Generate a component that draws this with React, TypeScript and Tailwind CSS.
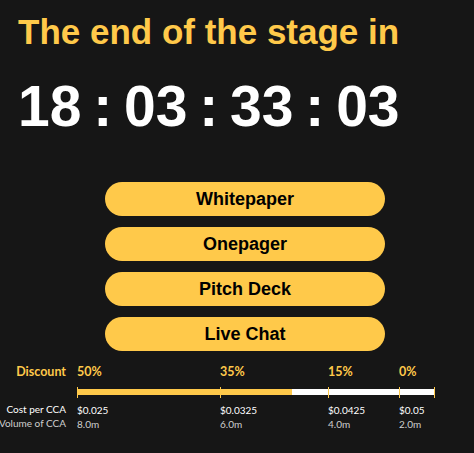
const stops = [
  { pct: "50%", cost: "$0.025", vol: "8.0m", w: "w-[143px]" },
  { pct: "35%", cost: "$0.0325", vol: "6.0m", w: "w-[108px]" },
  { pct: "15%", cost: "$0.0425", vol: "4.0m", w: "w-[71px]" },
  { pct: "0%", cost: "$0.05", vol: "2.0m", w: "w-[35px]" },
];

const links = ["Whitepaper", "Onepager", "Pitch Deck", "Live Chat"];

export default function App() {
  return (
    <div className="min-h-[453px] w-full overflow-hidden bg-[#161616] font-['Liberation_Sans',Arial,sans-serif]">
      {/* Заголовок и таймер */}
      <div className="pl-[18px] pt-[14px]">
        <h1 className="text-[35px] font-bold leading-none text-[#ffc94a]">The end of the stage in</h1>
        <div className="mt-[29px] text-[57px] font-bold leading-none text-white [word-spacing:-4px]">
          18 : 03 : 33 : 03
        </div>
      </div>

      {/* Кнопки */}
      <div className="mt-[47px] flex flex-col gap-[11px] pl-[105px]">
        {links.map((l) => (
          <button
            key={l}
            className="h-[34px] w-[280px] rounded-full bg-[#ffc94a] text-[18px] font-bold text-black"
          >
            {l}
          </button>
        ))}
      </div>

      {/* Таблица скидок */}
      <div className="mt-[13px] flex font-['Lato',sans-serif] text-[10px]">
        <div className="flex w-[66px] flex-col items-end whitespace-nowrap">
          <div className="text-[12.5px] font-bold leading-[16px] text-[#ffc94a]">Discount</div>
          <div className="h-[22px]" />
          <div className="leading-[14px] text-white">Cost per CCA</div>
          <div className="leading-[14px] text-[#cfcfcf]">Volume of CCA</div>
        </div>
        <div className="ml-[11px] flex flex-col whitespace-nowrap">
          <div className="flex">
            {stops.map((s) => (
              <div key={s.pct} className={`${s.w} text-[12.5px] font-bold leading-[16px] text-[#ffc94a]`}>
                {s.pct}
              </div>
            ))}
          </div>
          <div className="relative mt-[7px] h-[11px] w-[358px]">
            <div className="absolute left-0 top-[2px] flex h-[6px] w-full">
              <div className="w-[215px] bg-[#ffc94a]" />
              <div className="flex-1 bg-white" />
            </div>
            <div className="absolute left-0 top-0 h-[11px] w-px bg-[#ffc94a]" />
            <div className="absolute left-[143px] top-0 h-[11px] w-px bg-[#ffc94a]" />
            <div className="absolute left-[251px] top-0 h-[11px] w-px bg-[#ffc94a]" />
            <div className="absolute left-[322px] top-0 h-[11px] w-px bg-[#ffc94a]" />
            <div className="absolute left-[357px] top-0 h-[11px] w-px bg-[#ffc94a]" />
          </div>
          <div className="mt-[5px] flex">
            {stops.map((s) => (
              <div key={s.cost} className={`${s.w} leading-[14px] text-white`}>
                {s.cost}
              </div>
            ))}
          </div>
          <div className="flex">
            {stops.map((s) => (
              <div key={s.vol} className={`${s.w} leading-[14px] text-[#cfcfcf]`}>
                {s.vol}
              </div>
            ))}
          </div>
        </div>
      </div>
    </div>
  );
}
